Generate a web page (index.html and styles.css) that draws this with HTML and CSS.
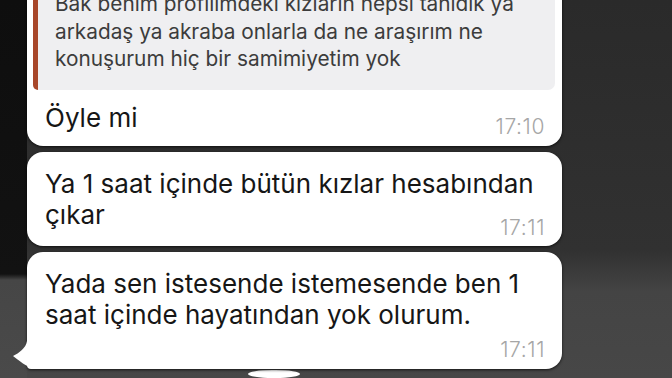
FILE: index.html
```html
<!DOCTYPE html>
<html lang="tr">
<head>
  <meta charset="UTF-8">
  <meta name="viewport" content="width=device-width, initial-scale=1.0">
  <title>Sohbet</title>
  <link rel="stylesheet" href="styles.css">
</head>
<body>
  <div class="edge"></div>
  <div class="feed">
    <!-- reply with quoted message -->
    <div class="bubble first">
      <div class="quote">
        Bak benim profilimdeki kızların hepsi tanıdık ya<br>
        arkadaş ya akraba onlarla da ne araşırım ne<br>
        konuşurum hiç bir samimiyetim yok
      </div>
      <div class="msg">Öyle mi</div>
      <span class="time inline">17:10</span>
    </div>

    <div class="bubble">
      <div class="msg">Ya 1 saat içinde bütün kızlar hesabından<br>çıkar</div>
      <span class="time">17:11</span>
    </div>

    <div class="bubble last">
      <div class="msg">Yada sen istesende istemesende ben 1<br>saat içinde hayatından yok olurum.</div>
      <span class="time apart">17:11</span>
      <svg class="tail" width="28" height="28" viewBox="0 0 28 28">
        <path d="M15 0 C14 7 7 12 1 15 C7 19 13 26 24 28 L28 28 L28 0 Z" fill="#ffffff"/>
      </svg>
    </div>

    <div class="peek"></div>
  </div>
</body>
</html>
```

FILE: styles.css
```css
body {
  margin: 0;
  width: 672px;
  height: 378px;
  overflow: hidden;
  display: flex;
  font-family: "Inter", "Liberation Sans", sans-serif;
  background: linear-gradient(to bottom, #2a2a2a 0, #313131 250px, #444444 292px, #474747 100%);
}

.edge {
  width: 27px;
  flex-shrink: 0;
  background: linear-gradient(to bottom, #0e0e0e 0, #121212 274px, #464646 280px, #4a4a4a 100%);
}

.feed {
  flex: 1;
  display: flex;
  flex-direction: column;
  gap: 6px;
  margin-top: -23px;
  padding-right: 110px;
}

.bubble {
  position: relative;
  background: #ffffff;
  border-radius: 16px;
  padding: 16px 17px 8px 18px;
  box-shadow: 0 1px 3px rgba(0, 0, 0, 0.7);
}

.bubble.first {
  padding: 7px 7px 9px 6px;
}

.bubble.first .msg,
.bubble.first .time {
  padding-left: 12px;
  padding-right: 10px;
}

.bubble.last {
  border-bottom-left-radius: 4px;
  padding-bottom: 9px;
}

.quote {
  background: #efeff1;
  border-left: 5px solid #a8472a;
  border-radius: 5px 7px 7px 5px;
  padding: 6px 10px 17px 17px;
  font-size: 20.8px;
  line-height: 27.5px;
  color: #3c3c3c;
  margin-bottom: 12px;
}

.msg {
  font-size: 26px;
  line-height: 31px;
  color: #161616;
}

.time {
  display: block;
  text-align: right;
  font-size: 21px;
  font-weight: 300;
  letter-spacing: 0.6px;
  line-height: 20px;
  color: #a6a6a6;
  margin-top: -12px;
}

.time.inline {
  margin-top: -16px;
}

.time.apart {
  margin-top: 10px;
}

.tail {
  position: absolute;
  left: -15px;
  bottom: 0;
}

.peek {
  width: 52px;
  height: 40px;
  margin-left: 221px;
  margin-top: -5px;
  border-radius: 50%;
  background: #ffffff;
}
```
